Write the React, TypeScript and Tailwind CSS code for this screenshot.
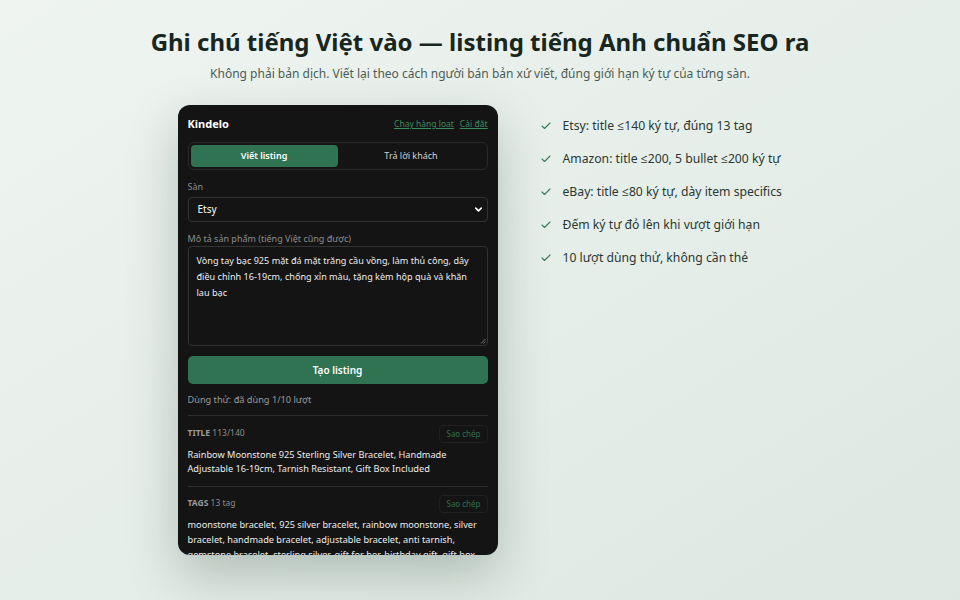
import { Check, ChevronDown } from 'lucide-react';

const features = [
  'Etsy: title ≤140 ký tự, đúng 13 tag',
  'Amazon: title ≤200, 5 bullet ≤200 ký tự',
  'eBay: title ≤80 ký tự, dày item specifics',
  'Đếm ký tự đỏ lên khi vượt giới hạn',
  '10 lượt dùng thử, không cần thẻ',
];

function CopyButton() {
  return (
    <button className="rounded border border-[#202020] px-[6px] h-[18px] text-[8px] text-[#2f7050]">
      Sao chép
    </button>
  );
}

function Popup() {
  return (
    <div className="w-[320px] h-[450px] shrink-0 overflow-hidden rounded-xl bg-[#141414] px-[10px] pt-[12px] shadow-[0_20px_50px_rgba(20,50,35,0.25)]">
      {/* Header */}
      <div className="flex items-center justify-between h-[15px]">
        <span className="text-[11px] font-bold text-white">Kindelo</span>
        <div className="flex gap-[6px] text-[8.5px] text-[#3c8a5f] underline">
          <a>Chạy hàng loạt</a>
          <a>Cài đặt</a>
        </div>
      </div>

      {/* Tabs */}
      <div className="mt-[10px] flex rounded-md border border-[#2a2a2a] p-[2px] h-[28px]">
        <div className="flex-1 flex items-center justify-center rounded-[4px] bg-[#2f7352] text-[9px] font-semibold text-white">
          Viết listing
        </div>
        <div className="flex-1 flex items-center justify-center text-[9px] text-[#d0d0d0]">
          Trả lời khách
        </div>
      </div>

      {/* Market */}
      <div className="mt-[10px] text-[9px] text-[#8c8c8c]">Sàn</div>
      <div className="mt-[3px] flex items-center justify-between h-[25px] rounded-[4px] border border-[#333] px-[9px]">
        <span className="text-[10px] text-white">Etsy</span>
        <ChevronDown size={11} strokeWidth={3.5} className="text-white -mr-[6px]" />
      </div>

      {/* Description */}
      <div className="mt-[10px] text-[9px] text-[#8c8c8c]">Mô tả sản phẩm (tiếng Việt cũng được)</div>
      <div className="relative mt-[1px] h-[100px] rounded-[4px] border border-[#333] px-[8px] py-[6px] text-[9.1px] leading-[16px] text-[#ececec]">
        Vòng tay bạc 925 mặt đá mặt trăng cầu vồng, làm thủ công, dây điều chỉnh 16-19cm, chống xỉn màu, tặng kèm hộp quà và khăn lau bạc
        <svg className="absolute right-[1px] bottom-[1px]" width="6" height="6" viewBox="0 0 6 6">
          <path d="M5.5 1 L1 5.5 M5.5 3.5 L3.5 5.5" stroke="#888" strokeWidth="0.8" />
        </svg>
      </div>

      <button className="mt-[10px] w-full h-[28px] rounded-[5px] bg-[#2f7352] text-[10px] font-semibold text-white">
        Tạo listing
      </button>

      <div className="mt-[9px] text-[9.2px] text-[#9a9a9a]">Dùng thử: đã dùng 1/10 lượt</div>

      {/* Title result */}
      <div className="mt-[8px] border-t border-[#2c2c2c] pt-[9px]">
        <div className="flex items-center justify-between">
          <span className="text-[8.5px] text-[#8c8c8c]">
            <b className="font-bold text-[#9a9a9a]">TITLE</b> 113/140
          </span>
          <CopyButton />
        </div>
        <p className="mt-[5px] text-[9.2px] leading-[14.5px] text-[#ececec]">
          Rainbow Moonstone 925 Sterling Silver Bracelet, Handmade Adjustable 16-19cm, Tarnish Resistant, Gift Box Included
        </p>
      </div>

      {/* Tags result */}
      <div className="mt-[9px] border-t border-[#2c2c2c] pt-[8px]">
        <div className="flex items-center justify-between">
          <span className="text-[8.5px] text-[#8c8c8c]">
            <b className="font-bold text-[#9a9a9a]">TAGS</b> 13 tag
          </span>
          <CopyButton />
        </div>
        <p className="mt-[4px] text-[9.2px] leading-[15px] text-[#ececec]">
          moonstone bracelet, 925 silver bracelet, rainbow moonstone, silver bracelet, handmade bracelet, adjustable bracelet, anti tarnish, gemstone bracelet, sterling silver, gift for her, birthday gift, gift box
        </p>
      </div>
    </div>
  );
}

export default function App() {
  return (
    <div
      className="min-h-[600px] w-full bg-gradient-to-br from-[#eff4f1] to-[#dde8e2] pt-[25px] text-[#1c2a23]"
      style={{ fontFamily: '"Noto Sans", "Open Sans", sans-serif' }}
    >
      <h1 className="text-center text-[24px] font-bold leading-[34px] text-[#17261e]">
        Ghi chú tiếng Việt vào — listing tiếng Anh chuẩn SEO ra
      </h1>
      <p className="mt-[6px] text-center text-[12px] text-[#4d5d55]">
        Không phải bản dịch. Viết lại theo cách người bán bản xứ viết, đúng giới hạn ký tự của từng sàn.
      </p>

      <div className="mt-[22px] flex justify-center gap-[42px]">
        <Popup />
        <ul className="w-[243px] pt-[11px] flex flex-col gap-[13px]">
          {features.map((f) => (
            <li key={f} className="flex items-center gap-[11px] h-[20px] text-[12.2px] whitespace-nowrap text-[#2a3831]">
              <Check size={12} strokeWidth={2.2} className="text-[#3b7a56] shrink-0" />
              {f}
            </li>
          ))}
        </ul>
      </div>
    </div>
  );
}
